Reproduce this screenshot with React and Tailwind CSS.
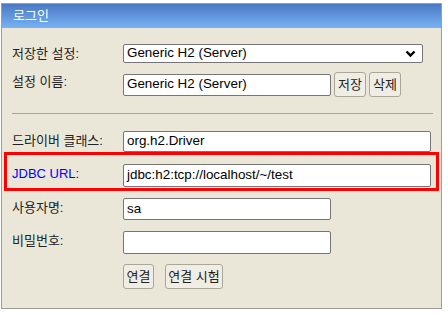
import React from "react";

const font = { fontFamily: '"Liberation Sans", "Noto Sans CJK KR", sans-serif' };

function Label({ children, blue }) {
  return (
    <div className={`w-[111px] shrink-0 pt-[2px] text-[13px] leading-[16px] ${blue ? "text-[#0000ff]" : "text-[#222]"}`}>
      {children}
    </div>
  );
}

function Input({ value, width, height = "h-[22px]" }) {
  return (
    <div className={`${width} ${height} flex items-center rounded-[2px] border border-[#767676] bg-white pl-[3px] text-[13.4px] text-black`}>
      {value}
    </div>
  );
}

function Btn({ children, w }) {
  return (
    <div className={`${w} flex h-[25px] items-center justify-center rounded-[3px] border border-[#aaa69a] bg-[#efede4] text-[13px] text-[#222]`}>
      {children}
    </div>
  );
}

export default function App() {
  return (
    <div className="h-[315px] w-[448px] bg-white pl-[1px] pt-[3px]" style={font}>
      <div className="flex h-[306px] w-[441px] flex-col border border-[#a09e94] bg-[#ebe7d8]">
        <div className="flex h-[24px] items-center bg-gradient-to-b from-[#4a79c2] to-[#78b2f5] pl-[11px] text-[13px] text-white">
          로그인
        </div>

        <div className="mt-[16px] flex items-start pl-[10px]">
          <Label>저장한 설정:</Label>
          <div className="flex h-[19px] w-[300px] items-center justify-between rounded-[2px] border border-[#767676] bg-white pl-[3px] pr-[6px] text-[13.4px] text-black">
            Generic H2 (Server)
            <svg width="11" height="8" viewBox="0 0 11 8">
              <path d="M1.5 1.5 L5.5 5.5 L9.5 1.5" fill="none" stroke="#000" strokeWidth="2.4" />
            </svg>
          </div>
        </div>

        <div className="mt-[9px] flex items-start pl-[10px]">
          <Label>설정 이름:</Label>
          <div className="flex items-center gap-[3px]">
            <Input value="Generic H2 (Server)" width="w-[208px]" />
            <Btn w="w-[32px]">저장</Btn>
            <Btn w="w-[32px]">삭제</Btn>
          </div>
        </div>

        <div className="ml-[10px] mr-[8px] mt-[16px] border-t border-[#a8a598]" />

        <div className="mt-[17px] flex items-start pl-[10px]">
          <Label>드라이버 클래스:</Label>
          <Input value="org.h2.Driver" width="w-[308px]" height="h-[21px]" />
        </div>

        <div className="mx-[2px] flex items-start border-[3px] border-[#ff0000] pb-[1px] pl-[5px] pt-[9px]">
          <Label blue>JDBC URL:</Label>
          <Input value="jdbc:h2:tcp://localhost/~/test" width="w-[308px]" height="h-[23px]" />
        </div>

        <div className="mt-[7px] flex items-start pl-[10px]">
          <Label>사용자명:</Label>
          <Input value="sa" width="w-[208px]" />
        </div>

        <div className="mt-[11px] flex items-start pl-[10px]">
          <Label>비밀번호:</Label>
          <Input value="" width="w-[208px]" height="h-[23px]" />
        </div>

        <div className="mt-[10px] flex gap-[11px] pl-[121px]">
          <Btn w="w-[31px]">연결</Btn>
          <Btn w="w-[58px]">연결 시험</Btn>
        </div>
      </div>
    </div>
  );
}
